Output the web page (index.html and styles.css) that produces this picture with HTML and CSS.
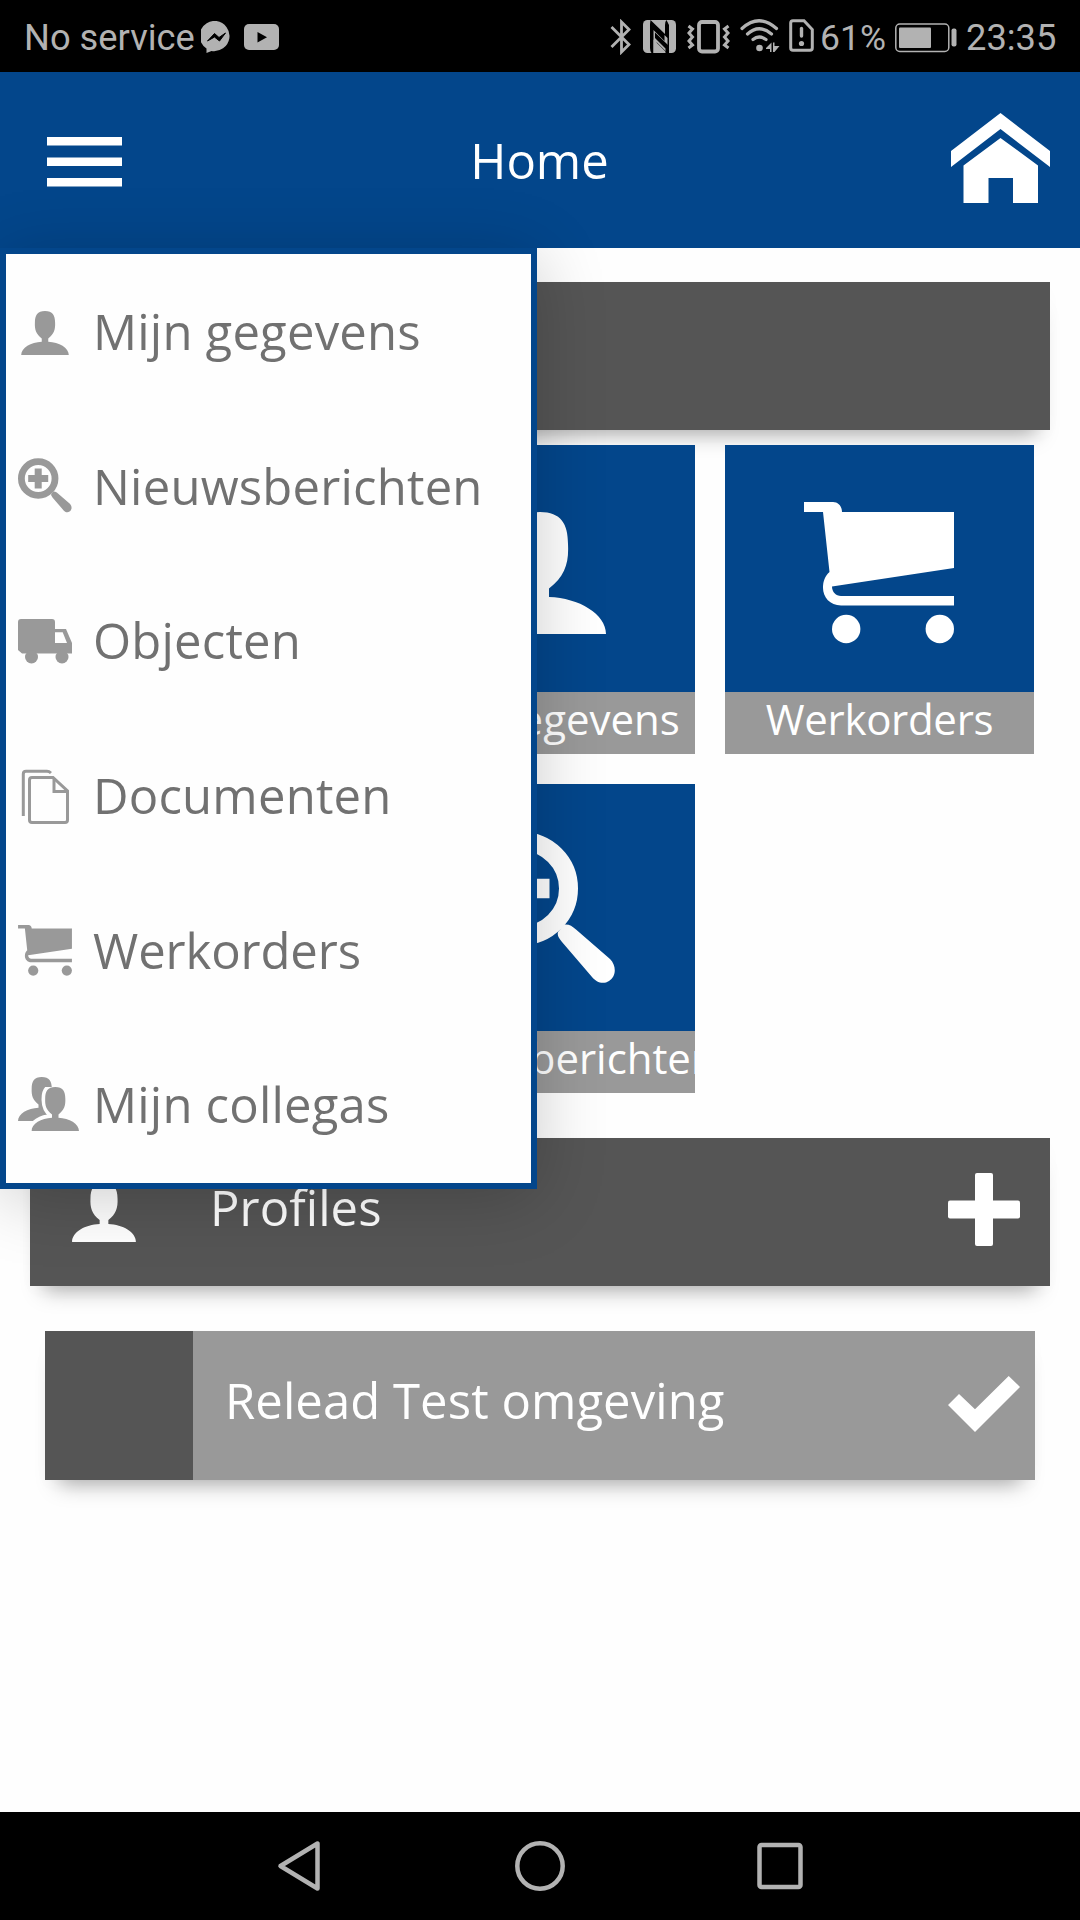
FILE: index.html
```html
<!DOCTYPE html>
<html lang="nl">
<head>
<meta charset="utf-8">
<title>Home</title>
<link rel="stylesheet" href="styles.css">
</head>
<body>
<svg width="0" height="0" class="defs">
  <symbol id="person" viewBox="0 0 132 122"><path d="M66 0C87 0 94 12 94 32C95 51 91 64 75 76.500V85C105 86 132 102 132 122H0C0 102 27 86 57 85V76.500C41 64 37 51 38 32C38 12 45 0 66 0Z"/></symbol>
  <symbol id="search" viewBox="0 0 151 152"><circle cx="56.500" cy="56.500" r="47" fill="none" stroke="currentColor" stroke-width="19"/><path d="M28.500 46.700H46.700V28.500H66.300V46.700H84.500V66.300H66.300V84.500H46.700V66.300H28.500Z"/><path d="M99 92.600C104 92 107 94 111 97.600L145 127C152 134 151 145 144 149C138 153 131 150 127 145L97 110C94 106 92 104 93 100Z"/></symbol>
  <symbol id="cart" viewBox="0 0 150 142"><path d="M0 0H29C34 0 38 4 38 10H150V66L28 84.500C28 90 32 94 37 94H150V103.500H37C26 103.500 19 95 19 86C19 79 21 74 25.500 70L19 10H0Z"/><circle cx="42.200" cy="127" r="14.200"/><circle cx="135.800" cy="127" r="14.200"/></symbol>
</svg>

<header class="status">
  <span class="carrier">No service</span>
  <svg class="messenger" width="31" height="32" viewBox="0 0 31 32"><path d="M15.500 0A15.300 15 0 1 1 10.500 30L5.500 32V27.500A15.300 15 0 0 1 15.500 0Z"/><path d="M6.500 20L13.500 12.500L18 16.500L24.500 12L18.500 20L13.500 16Z" fill="#000" stroke="#000" stroke-linejoin="round"/></svg>
  <svg class="youtube" width="35" height="26" viewBox="0 0 35 26"><rect width="35" height="26" rx="5"/><path d="M13.500 8L23 13.200L13.500 18.500Z" fill="#000"/></svg>
  <span class="spacer"></span>
  <svg class="bluetooth" width="21" height="36" viewBox="0 0 21 36"><path d="M1.500 8L19 25.500L11.500 33V3L19 10.500L1.500 28" fill="none" stroke="currentColor" stroke-width="2.800"/></svg>
  <svg class="nfc" width="33" height="34" viewBox="0 0 33 34"><rect width="33" height="33" rx="4.500"/><path d="M7.500 0L22 14V5Q22 1.500 23.500 0L26 5V33H24L10.500 19.500V33H8.500Q7 31 7 28V4Z" fill="#000"/><path d="M9.500 0H21Q21 3 21 12Z"/><path d="M10.500 10L21.500 21V15L24.500 18V33L13.500 22V33H10.500Z"/><path d="M12 12.500V18L22.500 28.500V33H25V25Z" fill="#000"/></svg>
  <svg class="vibrate" width="43" height="34" viewBox="0 0 43 34"><g fill="none" stroke="currentColor"><rect x="12" y="2" width="19" height="29.500" rx="3" stroke-width="3.800"/><path d="M1.500 6L5.500 9L2 13L5.500 17L2 21L5.500 25L1.500 28M41.500 6L37.500 9L41 13L37.500 17L41 21L37.500 25L41.500 28" stroke-width="3"/></g></svg>
  <svg class="wifi" width="40" height="33" viewBox="0 0 40 33"><g fill="none" stroke="currentColor" stroke-width="3.200" stroke-linecap="round"><path d="M2 9.500Q19 -6 36.500 9.500M7.500 15Q19 4.500 31.500 15M13 20.500Q19 15.500 26 20.500"/></g><circle cx="19.500" cy="29" r="3.300"/><path d="M26 29L31.500 23.500V33H30V30H26ZM33 23.500V33H34.500L39.500 27H34.500V23.500Z"/></svg>
  <svg class="sim" width="25" height="33" viewBox="0 0 25 33"><path d="M4 1.700H15L23.300 10.500V29Q23.300 31.300 21 31.300H4Q1.700 31.300 1.700 29V4Q1.700 1.700 4 1.700Z" fill="none" stroke="currentColor" stroke-width="3"/><path d="M12.500 9.500V17" stroke="currentColor" stroke-width="3.400" stroke-linecap="round"/><circle cx="12.500" cy="24.500" r="2.600"/></svg>
  <span class="percent">61%</span>
  <svg class="battery" width="62" height="30" viewBox="0 0 62 30"><rect x=".8" y="1" width="53" height="27.500" rx="4" fill="none" stroke="currentColor" stroke-width="1.500"/><rect x="4" y="4.500" width="32" height="20.500" rx="1"/><rect x="56.500" y="5.500" width="5" height="18" rx="2"/></svg>
  <span class="clock">23:35</span>
</header>

<div class="topbar">
  <svg class="burger" width="75" height="50" viewBox="0 0 75 50"><path d="M0 0H75V8.500H0ZM0 20.500H75V29H0ZM0 41H75V49.500H0Z"/></svg>
  <h1>Home</h1>
  <svg class="house" width="99" height="90" viewBox="0 0 99 90"><path d="M49.500 0L99 38V54L49.500 16L0 54V38ZM49.500 25L87 52.500V90H62V65H37.500V90H12.500V52.500Z"/></svg>

  <nav class="menu">
    <div class="item"><span class="ico"><svg class="m-person"><use href="#person"/></svg></span>Mijn gegevens</div>
    <div class="item"><span class="ico"><svg class="m-search"><use href="#search"/></svg></span>Nieuwsberichten</div>
    <div class="item"><span class="ico"><svg class="m-truck" viewBox="0 0 54 45"><path fill-rule="evenodd" d="M3 0H34Q37 0 37 3V10H48L54 24V34.500H4L0 31V3Q0 0 3 0ZM37 13.200V24H49L44.700 13.200Z"/><circle cx="13.500" cy="38" r="6.500"/><circle cx="44" cy="38" r="6.500"/></svg></span>Objecten</div>
    <div class="item"><span class="ico"><svg class="m-docs" viewBox="0 0 50 56"><g fill="none" stroke="currentColor" stroke-width="3"><path d="M12 9.500H33L47.500 23V52Q47.500 54.500 45 54.500H12Q9.500 54.500 9.500 52V12Q9.500 9.500 12 9.500Z"/><path d="M34 10V23.500H47M3.300 48V6Q3.300 3.200 6 3.200H27Q29 3.200 31 5"/></g></svg></span>Documenten</div>
    <div class="item"><span class="ico"><svg class="m-cart"><use href="#cart"/></svg></span><span class="tight">Werkorders</span></div>
    <div class="item"><span class="ico"><svg class="m-people" viewBox="0 0 61 54"><use href="#person" width="47.500" height="44"/><use href="#person" x="13.500" y="10" width="47.500" height="44" stroke="#fefefe" stroke-width="20"/><use href="#person" x="13.500" y="10" width="47.500" height="44"/></svg></span>Mijn collegas</div>
  </nav>
</div>

<main>
  <section class="bar"></section>
  <section class="tiles">
    <div class="tile"><div class="pic"><svg class="t-person"><use href="#person"/></svg></div><div class="label">Mijn gegevens</div></div>
    <div class="tile"><div class="pic"><svg class="t-cart"><use href="#cart"/></svg></div><div class="label tight">Werkorders</div></div>
    <div class="tile second"><div class="pic"><svg class="t-search"><use href="#search"/></svg></div><div class="label">Nieuwsberichten</div></div>
  </section>
  <section class="bar profiles">
    <svg class="b-person"><use href="#person"/></svg>
    <span class="text">Profiles</span>
    <svg class="plus" width="72" height="73" viewBox="0 0 72 73"><rect x="27" width="18" height="73" rx="2"/><rect y="27.500" width="72" height="18" rx="2"/></svg>
  </section>
  <section class="row">
    <span class="swatch"></span>
    <span class="text">Relead Test omgeving</span>
    <svg class="check" width="72" height="56" viewBox="0 0 72 56"><path d="M60.700 0L72 11L27 56L0 29L11 18L27 33.300Z"/></svg>
  </section>
</main>

<footer class="navbar">
  <svg width="64" height="60" viewBox="0 0 64 60"><path d="M12.500 30L49.500 7.500V52.500Z"/></svg>
  <svg width="64" height="60" viewBox="0 0 64 60"><circle cx="32" cy="30" r="22.700"/></svg>
  <svg width="64" height="60" viewBox="0 0 64 60"><rect x="11.500" y="9" width="41" height="42" rx="2"/></svg>
</footer>
</body>
</html>
```
FILE: styles.css
```css
* { box-sizing: border-box; }
html, body { margin: 0; height: 100%; }
body {
  display: flex;
  flex-direction: column;
  width: 1080px;
  height: 1920px;
  overflow: hidden;
  background: #fefefe;
  color: #fff;
  font: 49px "Open Sans", sans-serif;
}
svg { display: block; flex: none; fill: currentColor; }
.defs { display: none; }

/* Android status bar */
.status {
  display: flex;
  flex: none;
  height: 72px;
  padding: 0 24px 0 24px;
  background: #000;
  color: #b2b2b2;
  font: 36.3px/75px Roboto, sans-serif;
  white-space: nowrap;
}
.carrier { width: 170px; }
.spacer { flex: 1; }
.messenger { margin: 21px 0 0 7px; }
.youtube { margin: 24px 0 0 12px; }
.bluetooth { margin: 19px 12px 0 0; }
.nfc { margin: 20px 11px 0 0; }
.vibrate { margin: 20px 10px 0 0; }
.wifi { margin: 19px 9px 0 0; }
.sim { margin: 19px 6px 0 0; }
.percent { width: 66px; line-height: 77px; font-size: 35.5px; }
.battery { margin: 23px 9px 0 9px; }
.clock { width: 90px; }

/* App header */
.topbar {
  position: relative;
  z-index: 2;
  display: flex;
  flex: none;
  align-items: center;
  justify-content: space-between;
  height: 176px;
  padding: 0 30px 0 47px;
  background: #03468b;
}
.topbar h1 {
  margin: 0 0 0 6px;
  font-size: 49px;
  font-weight: 400;
}
.burger { margin-top: 3px; }
.house { margin-top: -4px; }

/* Drop-down menu that overlays the page */
.menu {
  position: absolute;
  top: 100%;
  left: 0;
  display: flex;
  flex-direction: column;
  width: 537px;
  height: 941px;
  border: 6px solid #03468b;
  background: #fefefe;
  box-shadow: 0 9px 66px rgba(0, 0, 0, .2);
  color: #717171;
  letter-spacing: .2px;
}
.item {
  display: flex;
  height: 154.6px;
  align-items: center;
  padding-left: 12px;
  white-space: nowrap;
}
.ico { width: 75px; color: #999; }
.m-person { width: 48px; height: 44px; margin: 3px 0 0 3px; }
.m-search { width: 54px; height: 55px; }
.m-truck { width: 54px; height: 45px; margin-top: 3px; }
.m-docs { width: 50px; height: 56px; margin: 2px 0 0 2px; }
.m-cart { width: 54px; height: 51px; margin-top: 2px; }
.m-people { width: 61px; height: 54px; }

/* Page content */
main { flex: 1; padding: 34px 30px 0; }
.bar, .row {
  display: flex;
  align-items: center;
  height: 148px;
  background: #555;
  box-shadow: 0 18px 20px -14px rgba(0, 0, 0, .34), 0 6px 18px rgba(0, 0, 0, .015);
}
.tiles {
  display: grid;
  grid-template-columns: repeat(3, 309px);
  gap: 30px;
  padding: 15px 0 45px 17px;
}
.tile {
  height: 309px;
  overflow: hidden;
  background: #999;
}
.tile:first-child, .second { grid-column-start: 2; }
.pic {
  display: flex;
  align-items: center;
  justify-content: center;
  height: 247px;
  background: #03468b;
}
.t-person { width: 132px; height: 122px; margin: 9px 2px 0 0; }
.t-cart { width: 150px; height: 142px; margin: 9px 2px 0 0; }
.t-search { width: 151px; height: 152px; }
.label {
  font-size: 42px;
  line-height: 54px;
  text-align: center;
  white-space: nowrap;
}
.tight { letter-spacing: -.1px; }
.label.tight { letter-spacing: -.3px; }
.second .label { letter-spacing: -.05px; }
.text { flex: 1; padding-bottom: 11px; letter-spacing: .07px; }
.profiles { padding: 0 30px 0 42px; }
.b-person { width: 64px; height: 59px; margin-right: 74px; }
.plus { margin-top: -5px; }
.row {
  height: 149px;
  margin: 45px 15px 0;
  padding-right: 15px;
  background: #999;
}
.swatch {
  width: 148px;
  height: 100%;
  margin-right: 32px;
  background: #555;
}
.check { margin-top: -4px; }

/* Android navigation bar */
.navbar {
  display: flex;
  flex: none;
  gap: 176px;
  justify-content: center;
  height: 108px;
  padding-top: 24px;
  background: #000;
  color: #b2b2b2;
}
.navbar svg {
  fill: none;
  stroke: currentColor;
  stroke-width: 4.5;
  stroke-linejoin: round;
}
```
